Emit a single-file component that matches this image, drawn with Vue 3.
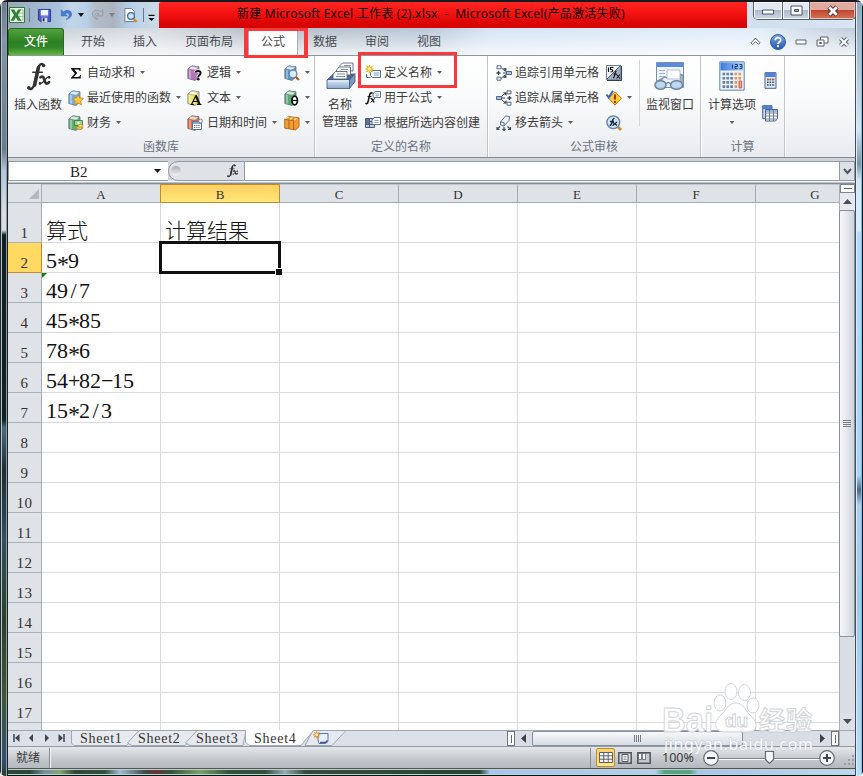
<script setup>
const ribbonTabs = [
  { label: '开始', w: 52 },
  { label: '插入', w: 52 },
  { label: '页面布局', w: 76 },
  { label: '公式', w: 52, active: true },
  { label: '数据', w: 52 },
  { label: '审阅', w: 52 },
  { label: '视图', w: 52 },
]
const library = [
  [
    { icon: 'sigma', text: '自动求和' },
    { icon: 'recent', text: '最近使用的函数' },
    { icon: 'money', text: '财务' },
  ],
  [
    { icon: 'logic', text: '逻辑' },
    { icon: 'textbook', text: '文本' },
    { icon: 'date', text: '日期和时间' },
  ],
  [
    { icon: 'lookup', text: '' },
    { icon: 'math', text: '' },
    { icon: 'more', text: '' },
  ],
]
const names = [
  { icon: 'define', text: '定义名称', drop: true },
  { icon: 'usein', text: '用于公式', drop: true },
  { icon: 'create', text: '根据所选内容创建' },
]
const audit = [
  { icon: 'precedents', text: '追踪引用单元格' },
  { icon: 'dependents', text: '追踪从属单元格' },
  { icon: 'eraser', text: '移去箭头', drop: true },
]
const auditIcons = [
  { icon: 'showf' },
  { icon: 'check', drop: true },
  { icon: 'evaluate' },
]
const columns = ['A', 'B', 'C', 'D', 'E', 'F', 'G']
const cells = {
  1: ['算式', '计算结果'],
  2: ['5*9'],
  3: ['49/7'],
  4: ['45*85'],
  5: ['78*6'],
  6: ['54+82-15'],
  7: ['15*2/3'],
}
const value = (r, c) => (cells[r] && cells[r][c]) || ''
const pieces = (t) => t.split(/([*\/+-])/).filter(Boolean)
const isOp = (p) => /^[*\/+-]$/.test(p)
const glyph = (p) => (p === '-' ? '−' : p)
const sheets = ['Sheet1', 'Sheet2', 'Sheet3', 'Sheet4']
</script>

<template>
  <svg class="defs" width="0" height="0">
    <defs>
      <linearGradient id="gTray" x1="0" y1="0" x2="0" y2="1"><stop offset="0" stop-color="#dbe8f7" /><stop offset="1" stop-color="#8fabd0" /></linearGradient>
      <linearGradient id="gHelp" x1="0" y1="0" x2="0" y2="1"><stop offset="0" stop-color="#7aa5e4" /><stop offset="1" stop-color="#2358b4" /></linearGradient>
      <linearGradient id="gCalc" x1="0" y1="0" x2="1" y2="0"><stop offset="0" stop-color="#3c78dc" /><stop offset="1" stop-color="#a9cffa" /></linearGradient>
      <symbol id="excel" viewBox="0 0 16 16">
        <path d="M.5.5h15v15H.5z" fill="#e9f5e6" stroke="#2d7d35" /><path d="M10 3h4v10h-4z" fill="#fff" stroke="#6aab67" stroke-width=".7" /><path d="M10 6h4M10 9.500h4" stroke="#6aab67" stroke-width=".7" />
        <path d="M1.500 2.500h3.800l1.800 3.500L9 2.500h3.300L8.700 8l3.700 5.800H8.800L6.800 10.200 5 13.800H1.500L5 8z" fill="#2b8434" />
      </symbol>
      <symbol id="save" viewBox="0 0 16 16">
        <path d="M1.500 1.500h13v13h-11l-2-2z" fill="#4a56c6" stroke="#2f3a96" /><path d="M4 2h8v6H4z" fill="#f0f5ff" /><path d="M4 8h8v1H4z" fill="#8fa0ef" /><path d="M5 10.500h6V15H5z" fill="#d4dbe9" /><path d="M6 11h2v3H6z" fill="#20254f" />
      </symbol>
      <symbol id="undo" viewBox="0 0 16 16">
        <path d="M2 2v7h7L6.500 6.800C8.500 5 11 5.500 11 8c0 2-1.300 3.500-3.500 5 4-.8 6.500-3 6.300-6.300C13.500 2.500 8 1.200 4.500 4.700z" fill="#4a7ed4" stroke="#3464b4" stroke-width=".7" />
      </symbol>
      <symbol id="redo" viewBox="0 0 16 16">
        <path d="M14 2v7H7l2.500-2.200C7.500 5 5 5.500 5 8c0 2 1.300 3.500 3.500 5-4-.8-6.500-3-6.300-6.300C2.500 2.500 8 1.200 11.500 4.700z" fill="#b3b9c1" stroke="#838d99" stroke-width=".7" />
      </symbol>
      <symbol id="preview" viewBox="0 0 16 16">
        <path d="M1.500.5h7l3 3v11h-10z" fill="#fff" stroke="#5f7690" /><circle cx="8" cy="8.500" r="3.600" fill="#c5e6fa" stroke="#4a6684" stroke-width="1.300" /><path d="M10.800 11.500l3.400 3.300" stroke="#d88a2a" stroke-width="2.400" />
      </symbol>
      <symbol id="fx" viewBox="0 0 26 31">
        <g fill="none" stroke="#333" stroke-linecap="round"><path d="M18.500 3.500C16.500.5 13 2.500 12 8L8.800 22C7.800 27.500 5 29.500 2.500 27" stroke-width="2.400" /><path d="M13 5.500L9 24" stroke-width="3.600" /><path d="M7 10.500h10" stroke-width="1.600" /><path d="M15 15.800c2.500-2 3.500 0 4.200 3s2 5 4.800 2" stroke-width="2.800" /><path d="M24 15.500c-3-1-5.500 7-9.500 7" stroke-width="1.400" /></g>
        <circle cx="18.300" cy="3.600" r="1.800" fill="#333" /><circle cx="3" cy="26.700" r="1.900" fill="#333" /><circle cx="24" cy="15.800" r="1.400" fill="#333" /><circle cx="14.600" cy="22.200" r="1.400" fill="#333" />
      </symbol>
      <symbol id="sigma" viewBox="0 0 16 16"><path d="M3 3h9.500v3h-.8C11.300 4.700 11 4.400 9.500 4.400H6.300L9.300 8l-3.600 3.900h4c1.600 0 2-.4 2.500-1.900h.8l-.4 3.500H3v-.8L6.800 8.500 3 3.900z" fill="#111" /></symbol>
      <symbol id="book" viewBox="0 0 16 16">
        <path d="M.8 4L5 .8l7 1V12l-4 3.500L.8 13.500z" fill="currentColor" stroke="#3e5870" stroke-width=".8" stroke-opacity=".75" /><path d="M1.200 4l6.800 1.300L11.800 2 5 1z" fill="currentColor" /><path d="M1.200 4l6.800 1.300L11.800 2 5 1z" fill="#fff" fill-opacity=".6" stroke="#52697d" stroke-width=".5" stroke-opacity=".7" /><path d="M3 2.600l7 1.200M3 5v8.800" stroke="#fff" stroke-opacity=".75" stroke-width=".9" />
      </symbol>
      <symbol id="recent" viewBox="0 0 16 16"><use href="#book" color="#74b3dd" /><path d="M10 4.500l1.700 3.400 3.900.5-2.900 2.600.8 3.900-3.500-2-3.500 2 .8-3.900L4.500 8.400l3.900-.5z" fill="#ffc63a" stroke="#c77b18" stroke-width=".7" /></symbol>
      <symbol id="money" viewBox="0 0 16 16"><use href="#book" color="#67ad73" /><path d="M6.500 5.500h8v5h-8z" fill="#9bd28c" stroke="#2f7740" stroke-width=".8" /><circle cx="10.500" cy="8" r="1.400" fill="#e6f6dc" /><ellipse cx="11.500" cy="12.800" rx="3.300" ry="1.700" fill="#f5c449" stroke="#a9791e" stroke-width=".7" /><ellipse cx="12.500" cy="10.800" rx="2.500" ry="1.400" fill="#fadc79" stroke="#a9791e" stroke-width=".6" /></symbol>
      <symbol id="logic" viewBox="0 0 16 16"><use href="#book" color="#b476b4" /><path d="M8.600 7.600c0-2 5-2.400 5 .5 0 2-2.300 1.900-2.300 4" fill="none" stroke="#fff" stroke-width="3.500" /><path d="M8.600 7.600c0-2 5-2.400 5 .5 0 2-2.300 1.900-2.300 4" fill="none" stroke="#111" stroke-width="1.900" /><circle cx="11.300" cy="14.300" r="1.300" fill="#111" /></symbol>
      <symbol id="textbook" viewBox="0 0 16 16"><use href="#book" color="#f0e46c" /><path d="M4.500 14.500L9 5.500M3.500 14.500h3.500M10 14.500h4.500M6.500 11.500h5" stroke="#111" stroke-width="1.200" fill="none" /><path d="M8.800 5.500l3.800 9" stroke="#111" stroke-width="2.200" /></symbol>
      <symbol id="date" viewBox="0 0 16 16"><use href="#book" color="#e8673c" /><path d="M5.500 6.500h9v8h-9z" fill="#fff" stroke="#56749c" /><path d="M6 7h8v2H6z" fill="#84aad8" /><path d="M7 10.500h6M7 12.500h6" stroke="#4a6a94" stroke-dasharray="1.200 1" /><circle cx="13.500" cy="6" r="2" fill="#e9eef4" stroke="#666" stroke-width=".7" /></symbol>
      <symbol id="lookup" viewBox="0 0 16 16"><use href="#book" color="#5b96c9" /><circle cx="9" cy="9" r="3.900" fill="#d2ebfa" stroke="#6f8296" stroke-width="1.300" /><path d="M11.800 12l3 3" stroke="#a85f1e" stroke-width="2.300" /></symbol>
      <symbol id="math" viewBox="0 0 16 16"><use href="#book" color="#5ea870" /><ellipse cx="10.700" cy="10.500" rx="2.700" ry="4.300" fill="#fff" stroke="#111" stroke-width="1.800" /><path d="M8.500 10.500h4.500" stroke="#111" stroke-width="1.200" /></symbol>
      <symbol id="more" viewBox="0 0 17 16"><path d="M.7 4L4.500 1l11.500 1.500V12L12.500 15.400.7 13.500z" fill="#f19b31" stroke="#a65d14" stroke-width=".8" /><path d="M.7 4l4.500.8L8.500 2M5.200 4.800V14M5.200 4.800l5 .5L13 2.500M10.200 5.300V15" fill="none" stroke="#a65d14" stroke-width=".9" /><path d="M1.500 3.500L4.700 1.500M6 4.200L9 2M11 4.800l2.300-2" stroke="#fff1cf" stroke-width="1.200" /></symbol>
      <symbol id="manager" viewBox="0 0 30 28">
        <path d="M1 18l6-6h21.500l-5 6z" fill="#4e6a94" stroke="#3f5878" stroke-width=".8" />
        <g fill="#fff" stroke="#54677f" stroke-width=".9"><path d="M14 3.500L16.500 1h10.500v8H14z" /><path d="M10.500 8L13 5h11.500v8H10.500z" /><path d="M7 12.500L9.500 9.500H21V17H7z" /></g>
        <path d="M18 3.500h7M15 7.500h7M11 12h8M10 14.500h9" stroke="#7f92ab" />
        <path d="M23.500 18l5.500-6.500v8L23.500 26.500z" fill="#7b98c1" stroke="#3f5878" stroke-width=".8" /><path d="M1 18h22.500v8.500H1z" fill="url(#gTray)" stroke="#3f5878" stroke-width=".8" /><path d="M1.800 18.800h21" stroke="#fff" />
      </symbol>
      <symbol id="define" viewBox="0 0 16 16"><path d="M1.500 9v3.500h4M5.500 7.500l2-2h8v7h-8l-2-2z" fill="#f7fbff" stroke="#5a708e" /><path d="M9 8h5M9 10h5" stroke="#86a1c6" /><path d="M4.500 0v8M.5 4h8M1.500 1l6 6M7.500 1l-6 6" stroke="#eeb01c" stroke-width="1.300" /><circle cx="4.500" cy="4" r="1.800" fill="#fff08c" /></symbol>
      <symbol id="usein" viewBox="0 0 16 16"><path d="M8 4l2-2.500h5.500v6H9L8 6z" fill="#f7fbff" stroke="#5a708e" /><path d="M10.500 4h3.500M10.500 5.800h3.500" stroke="#86a1c6" /><g fill="none" stroke="#111"><path d="M7.500 3.500c-1.500-1.500-2.500 0-3 2L3 12c-.5 2-1.500 2-2.500 1.200" stroke-width="1.500" /><path d="M2.500 6.500h4" /><path d="M5.500 8.500c2-1 2 4 4 3.500" stroke-width="1.400" /><path d="M10 8.300L5.500 12.500" /></g></symbol>
      <symbol id="create" viewBox="0 0 16 16"><path d="M.5 3.500h9v9h-9z" fill="#bfcbe0" stroke="#4d5d78" /><path d="M.5 6.500h9M.5 9.500h9M4.500 3.500v9" stroke="#4d5d78" /><path d="M1 4h3v5H1z" fill="#5f7296" /><path d="M7 5.500l2-3h6.500v7H7z" fill="#fff" stroke="#5a708e" /><path d="M9.500 5.500h4M9.500 7.500h4" stroke="#86a1c6" /></symbol>
      <symbol id="precedents" viewBox="0 0 16 16"><g fill="#fff" stroke="#536985"><path d="M1 .8h4v3H1zM1 12.200h4v3H1z" /><path d="M10.500 6.500h5v3h-5z" fill="#a9c0dd" /></g><path d="M.5 8h4M2.500 6v4" stroke="#334054" stroke-width="1.300" /><path d="M5.500 3l4 3.500M5.500 13l4-3.500M7 8h3" stroke="#334054" fill="none" /><path d="M7 3l3.500.2-.3 3.500zM7 13l3.500-.2-.3-3.500z" fill="#334054" /></symbol>
      <symbol id="dependents" viewBox="0 0 16 16"><g fill="#fff" stroke="#536985"><path d="M11 .8h4v3h-4zM11 12.200h4v3h-4z" /><path d="M.5 6.500h5v3h-5z" fill="#a9c0dd" /></g><path d="M11.500 8h4M13.500 6v4" stroke="#334054" stroke-width="1.300" /><path d="M5.500 6.500l4-3.500M5.500 9.500l4 3.500M6 8h3" stroke="#334054" fill="none" /><path d="M10.500 2.500v3.500L7 2.500zM10.500 13.500V10L7 13.500z" fill="#334054" /></symbol>
      <symbol id="eraser" viewBox="0 0 16 16"><path d="M4.500 7l5-6 4 .5-.5 4-5 5.500-3.500-1z" fill="#eef2f8" stroke="#5b7293" /><path d="M4.500 7l3.700.8L8 11" fill="none" stroke="#5b7293" /><path d="M4 11.500l-3 3M8 12v3.500M11.500 11.500l3 3M1 12v2.500h2.500M6.500 14l1.500 1.500L9.500 14M14.500 12v2.500H12" fill="none" stroke="#3c4b62" stroke-width="1.200" /></symbol>
      <symbol id="showf" viewBox="0 0 16 16"><path d="M.5.500h14v14H.500z" fill="#eef2f7" stroke="#4d5d72" stroke-width=".8" /><path d="M14.500 1v13.500H1z" fill="#9cadc3" /><path d="M14.500.500l-14 14" stroke="#333" stroke-width=".8" /><path d="M2.500 2.500v4.500M7.500 2.500h-3v2c3-.5 3 2.500 0 2.500" fill="none" stroke="#111" stroke-width="1.100" /><path d="M10.500 6.500c-2-1-1 6-3.500 6.500M7.500 9h3M10.500 9.500l3.500 4M14 9.500l-3.500 4" fill="none" stroke="#111" stroke-width="1.100" /><path d="M1 15.500h14.500V1" stroke="#333f50" fill="none" /></symbol>
      <symbol id="check" viewBox="0 0 16 16"><path d="M9 1.800l6.500 6.500L9 15 2.500 8.300z" fill="#ffcd38" stroke="#b77912" /><path d="M9 4.500v5M9 11v2" stroke="#c42414" stroke-width="2" /><path d="M.5 4.500l2.200 3L7 .8" fill="none" stroke="#3865bc" stroke-width="2" /></symbol>
      <symbol id="evaluate" viewBox="0 0 16 16"><path d="M12 12l3 3" stroke="#d28a30" stroke-width="2.800" /><circle cx="7.300" cy="7.300" r="6.400" fill="#cfe3f6" stroke="#67809e" stroke-width="1.300" /><path d="M8.500 3.500c-2.500-1.200-1.800 7-4.800 7M4 6.500h4M7 7.500l4 3M11 7l-4.500 3.800" fill="none" stroke="#17243c" stroke-width="1.300" /></symbol>
      <symbol id="watch" viewBox="0 0 32 32"><path d="M2.500 1.500h27v25h-27z" fill="#eef4fd" stroke="#7b8fb2" /><path d="M3 2h26v4H3z" fill="#5c8ade" /><path d="M5 9.500h6M5 12.500h6M5 15.500h6M5 18.500h4" stroke="#a4b4ce" /><path d="M13 9h13v9H13z" fill="#fff" stroke="#b3c1d8" /><g fill="#b8d4ec" fill-opacity=".9" stroke="#70839c" stroke-width="1.500"><ellipse cx="6.500" cy="24" rx="5.500" ry="4.300" /><ellipse cx="22.500" cy="24" rx="6" ry="4.300" /></g><path d="M12 23c1.500-2 3-2 4.500 0M2 21l9-5 2 1M27 21V13.500l2 1V22" fill="none" stroke="#77889e" stroke-width="1.300" /></symbol>
      <symbol id="calc" viewBox="0 0 26 30"><path d="M.8.8h24.400v28.400H.8z" fill="#eaf2fc" stroke="#5f83b8" /><path d="M1.500 1.500h23v8h-23z" fill="url(#gCalc)" /><path d="M13.500 3.500v4M16 3.500h2.500v2H16v2h2.500M20.500 3.500H23v4h-2.500M21 5.500h2" fill="none" stroke="#16335e" stroke-width=".9" /><path d="M3.500 13h10.500M3.500 17.200h10.500M3.500 21.400h10.500M3.500 25.600h10.500" stroke="#6c7f99" stroke-width="2.600" stroke-dasharray="2.700 1.200" /><path d="M15.500 13h7.500M15.500 17.200h7.500M15.500 21.400h3M15.500 25.600h3" stroke="#e39a4e" stroke-width="2.600" stroke-dasharray="2.700 1.200" /><path d="M20 20h2.700v7H20z" fill="#f3a08c" stroke="#c9452c" stroke-width=".8" /></symbol>
      <symbol id="calcnow" viewBox="0 0 13 17"><path d="M1 .7h11v15.600H1z" fill="#dfe9f6" stroke="#4a6288" /><path d="M1.500 1h10v4h-10z" fill="#4d82d8" /><path d="M3 7.500h8M3 10.300h8M3 13.100h8" stroke="#36507a" stroke-width="1.500" stroke-dasharray="1.600 1" /><path d="M3 7.500h8" stroke="#cf4c3a" stroke-width="1.500" stroke-dasharray="1.600 1" /></symbol>
      <symbol id="calcsheet" viewBox="0 0 16 17"><path d="M.7.7H10v13H.7z" fill="#c7d7ee" stroke="#4a6288" /><path d="M1 1h9v3H1z" fill="#4d82d8" /><path d="M3.500 4.500h12v9l-2 2.500h-10z" fill="#fff" stroke="#4f627e" /><path d="M4 5h11v2H4z" fill="#9bb6df" /><path d="M3.500 8h12M3.500 11h12M3.500 14h11M7.500 5v11M11.500 5v11" stroke="#5f7491" stroke-width=".9" /></symbol>
      <symbol id="newsheet" viewBox="0 0 16 14"><path d="M5 2.500h10v8l-2.500 2H6L5 9z" fill="#e9f0fc" stroke="#5a74ad" /><path d="M7 11.500h5.500l2-2" stroke="#40599b" stroke-width="1.500" fill="none" /><path d="M3.800.3v7M.3 3.800h7M1.300 1.300l5 5M6.300 1.300l-5 5" stroke="#e58d23" stroke-width="1.200" /><circle cx="3.800" cy="3.800" r="1.500" fill="#fff2c0" /></symbol>
    </defs>
  </svg>

  <div class="window">
    <header class="titlebar">
      <div class="quick">
        <svg class="q-excel"><use href="#excel" /></svg>
        <i class="bar"></i>
        <svg class="q-save"><use href="#save" /></svg>
        <svg class="q-undo"><use href="#undo" /></svg>
        <i class="drop black"></i>
        <svg class="q-redo"><use href="#redo" /></svg>
        <i class="drop grey"></i>
        <svg class="q-prev"><use href="#preview" /></svg>
        <i class="bar second"></i>
        <svg class="q-more" viewBox="0 0 8 8"><path d="M.5 1h7" stroke="#111" stroke-width="1.300" /><path d="M.5 4h7L4 7.500z" fill="#111" /></svg>
      </div>
      <div class="title"><span>新建 Microsoft Excel 工作表 (2).xlsx&nbsp; -&nbsp; Microsoft Excel(产品激活失败)</span></div>
      <div class="controls">
        <div class="ctl"><svg width="14" height="6"><path d="M1.500 1h11v4h-11z" fill="#fff" stroke="#4a5468" /></svg></div>
        <div class="ctl mid"><svg width="13" height="11"><path d="M1 1h11v9H1z" fill="#fff" stroke="#4a5468" /><path d="M4.500 4.500h4v2h-4z" fill="#9ba9bd" stroke="#4a5468" /></svg></div>
        <div class="ctl close"><svg width="14" height="12"><path d="M3 2l8 8M11 2l-8 8" stroke="#4e343a" stroke-width="4.800" /><path d="M3.300 2.300l7.400 7.400M10.700 2.300L3.300 9.700" stroke="#fff" stroke-width="2.800" /></svg></div>
      </div>
    </header>

    <nav class="tabs">
      <div class="file">文件</div>
      <div v-for="t in ribbonTabs" :key="t.label" class="tab" :class="{ active: t.active }" :style="{ width: t.w + 'px' }">{{ t.label }}</div>
      <div class="tabtools">
        <svg width="11" height="9"><path d="M1 5.800L5.500 1.200 10 5.800 8.500 7.500 5.500 4.600 2.500 7.500z" fill="#fff" stroke="#59616c" /></svg>
        <svg width="16" height="16"><circle cx="8" cy="8" r="7.500" fill="url(#gHelp)" stroke="#2f5da8" /><path d="M5.300 6.300c0-3.500 5.400-3.300 5.400-.3 0 2-2.700 1.900-2.700 4" stroke="#fff" stroke-width="1.800" fill="none" /><circle cx="8" cy="12.200" r="1.100" fill="#fff" /></svg>
        <svg width="12" height="6"><path d="M1 1h10v4H1z" fill="#fff" stroke="#59616c" /></svg>
        <svg width="13" height="11"><path d="M4.500 1h7.500v6H4.500z" fill="#fff" stroke="#59616c" /><path d="M1 4h7v6H1z" fill="#fff" stroke="#59616c" /><path d="M3.500 6.500h2v1h-2z" fill="none" stroke="#59616c" /></svg>
        <svg width="12" height="10"><path d="M2.500 1.500l7 7M9.500 1.500l-7 7" stroke="#59616c" stroke-width="4" /><path d="M2.500 1.500l7 7M9.500 1.500l-7 7" stroke="#fff" stroke-width="2" /></svg>
      </div>
    </nav>

    <section class="ribbon">
      <div class="group g1">
        <div class="body">
          <div class="big"><svg class="i-fx"><use href="#fx" /></svg><span>插入函数</span></div>
          <div v-for="(col, i) in library" :key="i" class="stack">
            <div v-for="b in col" :key="b.icon" class="cmd"><svg class="ic"><use :href="'#' + b.icon" /></svg><span v-if="b.text">{{ b.text }}</span><i class="drop"></i></div>
          </div>
        </div>
        <div class="caption">函数库</div>
      </div>
      <div class="group g2">
        <div class="body">
          <div class="big"><svg class="i-manager"><use href="#manager" /></svg><span>名称<br />管理器</span></div>
          <div class="stack">
            <div v-for="b in names" :key="b.icon" class="cmd"><svg class="ic"><use :href="'#' + b.icon" /></svg><span>{{ b.text }}</span><i v-if="b.drop" class="drop"></i></div>
          </div>
        </div>
        <div class="caption">定义的名称</div>
      </div>
      <div class="group g3">
        <div class="body">
          <div class="stack">
            <div v-for="b in audit" :key="b.icon" class="cmd"><svg class="ic"><use :href="'#' + b.icon" /></svg><span>{{ b.text }}</span><i v-if="b.drop" class="drop"></i></div>
          </div>
          <div class="stack">
            <div v-for="b in auditIcons" :key="b.icon" class="cmd"><svg class="ic"><use :href="'#' + b.icon" /></svg><i v-if="b.drop" class="drop"></i></div>
          </div>
          <div class="big"><svg class="i-watch"><use href="#watch" /></svg><span>监视窗口</span></div>
        </div>
        <div class="caption">公式审核</div>
      </div>
      <div class="group g4">
        <div class="body">
          <div class="big"><svg class="i-calc"><use href="#calc" /></svg><span>计算选项</span><i class="drop"></i></div>
          <div class="small"><svg class="i-now"><use href="#calcnow" /></svg><svg class="i-sheet"><use href="#calcsheet" /></svg></div>
        </div>
        <div class="caption">计算</div>
      </div>
    </section>

    <section class="formula">
      <div class="namebox"><span>B2</span><i class="drop black"></i></div>
      <div class="fxzone"><i class="knob"></i><svg class="i-fxs"><use href="#fx" /></svg></div>
      <div class="input"></div>
      <div class="expand"><svg width="9" height="7"><path d="M1 1l3.500 4L8 1" fill="none" stroke="#4c545e" stroke-width="2" /></svg></div>
    </section>

    <section class="work">
      <div class="sheet">
        <div class="row head">
          <div class="rh corner"><i></i></div>
          <div v-for="c in columns" :key="c" class="ch" :class="{ on: c === 'B' }">{{ c }}</div>
        </div>
        <div v-for="r in 18" :key="r" class="row" :class="{ first: r === 1 }">
          <div class="rh" :class="{ on: r === 2 }">{{ r < 18 ? r : '' }}</div>
          <div v-for="(c, ci) in columns" :key="c" class="cell" :class="{ sel: r === 2 && ci === 1, flag: r === 3 && ci === 0 }">
            <span v-if="value(r, ci)"><template v-for="(p, k) in pieces(value(r, ci))" :key="k"><b v-if="isOp(p)" :class="{ star: p === '*' }">{{ glyph(p) }}</b><template v-else>{{ p }}</template></template></span>
          </div>
        </div>
      </div>
      <div class="vscroll">
        <div class="split"><i></i></div>
        <div class="arrow"><svg width="9" height="5"><path d="M0 5h9L4.500 0z" fill="#4b4f55" /></svg></div>
        <div class="thumb"><i></i><i></i><i></i><i></i></div>
        <div class="gap"></div>
        <div class="arrow down"><svg width="9" height="5"><path d="M0 0h9L4.500 5z" fill="#4b4f55" /></svg></div>
      </div>
    </section>

    <section class="sheetbar">
      <div class="navs">
        <svg width="7" height="8"><path d="M1 0v8" stroke="#3d444d" stroke-width="1.500" /><path d="M6.500 0v8L2 4z" fill="#3d444d" /></svg>
        <svg width="7" height="8"><path d="M5 0v8L1 4z" fill="#3d444d" /></svg>
        <svg width="7" height="8"><path d="M2 0v8l4-4z" fill="#3d444d" /></svg>
        <svg width="7" height="8"><path d="M.5 0v8L5 4z" fill="#3d444d" /><path d="M6 0v8" stroke="#3d444d" stroke-width="1.500" /></svg>
      </div>
      <div class="strip">
        <svg class="shapes" width="290" height="17">
          <g fill="#e6e9ee" stroke="#a0a8b4"><path d="M.5.500H68L56 15.500H3L.5 13z" /><path d="M68 .500h58L114 15.500H61L56.500 13z" /><path d="M126 .500h49L172 15.500H119L114.500 13z" /><path d="M242 .500h33L261 15.500H234z" /></g>
          <path d="M174.500 0H243L230 15.500H178L174.500 12z" fill="#fff" /><path d="M174.500 0v12l3.500 3.500h52L242.500 .5" fill="none" stroke="#a0a8b4" />
        </svg>
        <div class="labels"><span v-for="s in sheets" :key="s">{{ s }}</span><svg class="i-new"><use href="#newsheet" /></svg></div>
      </div>
      <div class="hscroll">
        <div class="hsplit"><i></i></div>
        <div class="harrow"><svg width="5" height="9"><path d="M5 0v9L0 4.500z" fill="#3d4248" /></svg></div>
        <div class="hthumb"><i></i><i></i><i></i><i></i></div>
        <div class="harrow right"><svg width="5" height="9"><path d="M0 0v9l5-4.500z" fill="#3d4248" /></svg></div>
        <div class="hsplit"><i></i></div>
      </div>
      <div class="cornerbox"></div>
    </section>

    <footer class="status">
      <div class="ready">就绪</div>
      <div class="views">
        <div class="view on"><svg width="14" height="11"><path d="M.5.5h13v10H.5zM.5 3.800h13M.5 7.200h13M4.800.5v10M9.200.5v10" fill="#fff" stroke="#5c5f66" /></svg></div>
        <div class="view"><svg width="14" height="12"><path d="M.8.800h12.400v10.400H.800z" fill="#d5d8dc" stroke="#50555c" stroke-width="1.500" /><path d="M4 2.500h6v7H4z" fill="#fff" stroke="#50555c" /><path d="M5.500 4.500h3M5.500 6h3M5.500 7.500h3" stroke="#777" stroke-width=".7" /></svg></div>
        <div class="view"><svg width="14" height="12"><path d="M.8.800h12.400v10.400H.800z" fill="#c4c8ce" stroke="#50555c" stroke-width="1.500" /><path d="M1.500 1.500h3v6h-3zM5.500 1.500h3v6h-3z" fill="#fff" stroke="#50555c" stroke-width=".7" /></svg></div>
      </div>
      <span class="percent">100%</span>
      <svg class="zoom" width="134" height="18"><path d="M16 9.500h103" stroke="#7d858f" /><path d="M16 10.500h103" stroke="#fff" /><g fill="#f7f8f9" stroke="#646b73" stroke-width="1.200"><circle cx="9" cy="9" r="7.300" /><circle cx="125" cy="9" r="7.300" /><path d="M63.500 2.500h8v8l-4 4-4-4z" /></g><path d="M5 9h8M121 9h8M125 5v8" stroke="#3f464f" stroke-width="2" /></svg>
      <svg class="grip" width="12" height="12"><path d="M9 0h2v2H9zM5 4h2v2H5zM9 4h2v2H9zM1 8h2v2H1zM5 8h2v2H5zM9 8h2v2H9z" fill="#9ba0a8" /></svg>
    </footer>

    <div class="mark tabmark"></div>
    <div class="mark namemark"></div>

    <svg class="watermark" width="160" height="80" viewBox="0 0 160 80">
      <g fill="#fff" fill-opacity=".9" stroke="#c9ccd1" stroke-opacity=".85" stroke-width="1">
        <ellipse cx="60" cy="23" rx="6" ry="8" /><ellipse cx="71" cy="11.500" rx="6" ry="8" /><ellipse cx="84.500" cy="12.500" rx="6" ry="8" /><ellipse cx="93" cy="25.500" rx="6" ry="7.500" />
        <path d="M76 23c8 0 9 8 15 13 8 7 6 16-3 16H64c-9 0-11-9-4-16 6-5 8-13 16-13z" />
        <text x="2" y="52" class="wm-bai" textLength="51" lengthAdjust="spacingAndGlyphs">Bai</text>
        <text x="65" y="47" class="wm-du" textLength="23">du</text>
        <text x="99" y="50" class="wm-cn" textLength="53">经验</text>
      </g>
      <text x="4" y="70" class="wm-url" textLength="149">jingyan.baidu.com</text>
    </svg>
  </div>
</template>

<style>
html, body { margin: 0; overflow: hidden; }
</style>

<style scoped>
* { box-sizing: border-box; }
.defs { position: absolute; }
svg { display: block; flex: none; }
.window {
  position: relative; width: 863px; height: 776px; display: flex; flex-direction: column;
  padding: 1px 8px 8px; font: 12px/16px "Noto Sans", "Noto Sans CJK SC", sans-serif; color: #3b3b3b; overflow: hidden;
  border-radius: 7px 7px 5px 5px;
  background:
    linear-gradient(#16191d, #16191d) 0 0 / 100% 2px no-repeat,
    linear-gradient(90deg, #222a30 0 1px, #b9c5ca 1px 2px, transparent 2px 6px, #8fa0a4 6px 7px, #17201f 7px 8px) 0 0 / 8px 100% no-repeat,
    linear-gradient(90deg, #404d5e 0 1px, #d9efff 1px 2px, transparent 2px 6px, #61c8e8 6px 7px, #10151b 7px 8px) 100% 0 / 8px 100% no-repeat,
    linear-gradient(#68778b, #8493a6 40px, #687b90 150px, #acc4e0 170px, #d8dce4 212px, #d8dce4 230px, #111f24 235px, #0e2226 420px, #476a82 428px, #1b2c35 470px, #2e5060 540px, #26422a 620px, #3a5836 700px, #315078 760px, #263f2a) 0 0 / 8px 100% no-repeat,
    linear-gradient(#9aa4b0, #d5e3f2 130px, #8390a0 164px, #d9e4ef 180px, #dcebfa 230px, #b6d8fb 233px, #aed2f7 475px, #526780 490px, #b0cfef 505px, #a8c8ea 600px, #bddcf8) 100% 0 / 8px 100% no-repeat,
    linear-gradient(#4a5651 0 1px, #c5cfcc 1px 2px, transparent 2px 6px, #b6d6d2 6px 7px, #0d1314 7px) 0 100% / 100% 8px no-repeat,
    linear-gradient(90deg, #2d4638 30px, #7890a0 45px, #86a474 60px, #304638 75px, #34503c 105px, #a2bdd2 120px, #3f4c48 145px, #6a3238 155px, #34513c 170px, #7aa26c 200px, #33503b 230px, #334d39 265px, #95abb8 285px, #344b3a 305px, #2b4434 480px, #a6c5ea 490px, #b4cff0 655px, #54a080 665px, #58a482 690px, #a6c5ea 698px, #bdd9f6) 0 100% / 100% 8px no-repeat,
    #ced6e0;
}
.titlebar { height: 26px; margin-top: 1px; flex: none; display: flex; background: linear-gradient(90deg, #99a8b8, #a8c3de 50px, #c3d5e8 62px, #b7d0e8 78px, #b3bcc7 88px, #aab3be 105px, #b5d0ea 122px, #cddae6 150px, #b3c2d3 160px, #dfe9f3 735px, #d1deec 745px, #d8e5f3); }
.quick { width: 151px; display: flex; align-items: center; padding-left: 1px; flex: none; }
.bar { width: 1px; height: 14px; background: #6c7887; margin: 0 7px 0 4px; }
.q-excel { width: 16px; height: 16px; }
.q-save { width: 15px; height: 15px; }
.q-undo { width: 15px; height: 14px; margin-left: 7px; }
.q-redo { width: 15px; height: 14px; margin-left: 6px; }
.q-prev { width: 16px; height: 15px; margin-left: 8px; }
.bar.second { margin: 0 4px 0 4px; }
.q-more { width: 7px; height: 8px; margin-top: 5px; }
.drop { width: 5px; height: 3px; flex: none; background: #606060; clip-path: polygon(0 0, 100% 0, 50% 100%); margin-left: 5px; }
.drop.black { width: 7px; height: 4px; background: #161616; }
.quick .drop { margin-left: 4px; width: 6px; height: 4px; }
.drop.grey { background: #7a828d; }
.title { width: 588px; flex: none; background: linear-gradient(#ff2522, #f31311 45%, #da0504 80%, #d50707); color: #120506; padding: 4px 0 0 78px; white-space: nowrap; border-radius: 2px 0 0 0; letter-spacing: .25px; }
.controls { display: flex; width: 103px; height: 18px; margin-left: 6px; border: 1px solid #53606f; border-top: 0; border-radius: 0 0 5px 5px; overflow: hidden; flex: none; }
.ctl { width: 28px; display: flex; align-items: center; justify-content: center; background: linear-gradient(#e3e9f0 45%, #aebaca 50%, #ccd8e4); box-shadow: inset 0 0 0 1px #f3f6fa; }
.ctl:first-child { padding-top: 3px; }
.ctl.mid { width: 27px; border-left: 1px solid #53606f; }
.ctl.close { flex: 1; border-left: 1px solid #53606f; background: linear-gradient(#e0aaa0 45%, #bf4631 50%, #d87655); box-shadow: inset 0 0 0 1px #edbdb4; }
.tabs { height: 27px; flex: none; display: flex; background: linear-gradient(transparent, rgba(255,255,255,.78)), linear-gradient(90deg, #c5ccd5, #d7dbe1 150px, #b5bcc6 250px, #b9c8d9 420px, #d4e3f3 480px, #e1edf9 750px, #bfccd9 848px); }
.file { width: 56px; height: 27px; margin-right: 3px; background: linear-gradient(#52a23e, #2c8024 50%, #2f8429 70%, #65b840); border: 1px solid #256b22; border-bottom: 0; border-radius: 3px 3px 0 0; color: #fff; text-align: center; line-height: 26px; font-weight: 500; }
.tab { height: 27px; text-align: center; line-height: 28px; color: #484b50; flex: none; }
.tab.active { background: #fff; border: 1px solid #a9afb7; border-bottom: 0; margin: 0 1px 0 1px; width: 50px !important; line-height: 26px; }
.tabtools { margin-left: auto; display: flex; align-items: center; gap: 9px; padding: 0 5px 0 0; height: 27px; }
.ribbon { height: 103px; flex: none; display: flex; border-top: 1px solid #8e959f; border-bottom: 1px solid #858b93; background: linear-gradient(#fff, #fafbfc 40%, #e9ebef); }
.group { border-right: 1px solid #bfc4ca; box-shadow: 1px 0 0 #fff; display: flex; flex-direction: column; flex: none; }
.g1 { width: 307px; } .g2 { width: 173px; } .g3 { width: 213px; } .g4 { width: 84px; }
.body { height: 83px; display: flex; padding-top: 4px; }
.g1 .body { padding-left: 6px; } .g2 .body { padding-left: 5px; } .g3 .body { padding-left: 8px; } .g4 .body { padding-left: 7px; }
.caption { text-align: center; color: #6b7280; line-height: 16px; white-space: nowrap; }
.stack { display: flex; flex-direction: column; flex: none; }
.cmd { height: 25px; display: flex; align-items: center; white-space: nowrap; }
.ic { width: 16px; height: 16px; margin-right: 3px; }
.cmd > .ic + .drop { margin-left: 2px; }
.g1 .stack:nth-child(2) { width: 119px; }
.g1 .stack:nth-child(3) { width: 97px; }
.g1 .stack:nth-child(3) .ic { margin-right: 4px; }
.big { display: flex; flex-direction: column; align-items: center; text-align: center; flex: none; white-space: nowrap; }
.g1 .big { width: 48px; margin-right: 6px; }
.i-fx { width: 25px; height: 30px; margin: 2px 0 5px; }
.i-manager { width: 30px; height: 28px; margin: 2px 0 6px; }
.g2 .big { width: 41px; margin-right: 4px; line-height: 17px; }
.g2 .big span { margin-left: -1px; }
.g3 .stack:first-child { width: 110px; }
.g3 .stack:nth-child(2) { width: 33px; }
.g3 .big { width: 61px; border-left: 1px solid #d3d7dc; height: 66px; }
.i-watch { width: 32px; height: 32px; margin: 1px 0 4px; }
.i-calc { width: 26px; height: 30px; margin: 1px 0 6px; }
.g4 .big { width: 48px; }
.g4 .big .drop { margin: 8px 0 0; }
.small { margin-left: 6px; padding: 12px 0 0 0; display: flex; flex-direction: column; gap: 16px; align-items: center; flex: none; }
.i-now { width: 13px; height: 17px; } .i-sheet { width: 16px; height: 17px; }
.formula { height: 26px; flex: none; display: flex; padding: 3px 0 3px; background: linear-gradient(#cfd3d9 0 3px, #cfd4da 3px 22px, #f5f6f8 23px, #f5f6f8 24px, #858d96 25px); }
.namebox { width: 160px; height: 20px; border: 1px solid #9199a2; border-right: 0; background: #fff; display: flex; align-items: center; padding-left: 61px; color: #222; font: 15px/20px "Liberation Serif", serif; }
.namebox span { width: 19px; padding-top: 1px; }
.namebox .drop { margin-left: 65px; }
.fxzone { width: 77px; height: 20px; border: 1px solid #9199a2; border-radius: 10px 0 0 10px; background: #dfe2e6; display: flex; align-items: center; }
.knob { width: 10px; height: 10px; border-radius: 5px; background: linear-gradient(#a8adb4, #f4f5f6); margin-left: 2px; }
.i-fxs { width: 13px; height: 14px; margin-left: 45px; }
.input { flex: 1; height: 20px; background: #fff; border: solid #9199a2; border-width: 1px 0; }
.expand { width: 16px; height: 20px; border: 1px solid #9199a2; background: #dde1e5; display: flex; align-items: center; justify-content: center; }
.work { height: 546px; flex: none; display: flex; }
.sheet { width: 831px; height: 546px; overflow: hidden; background: #fff; }
.row { display: flex; height: 30px; width: 900px; }
.row.first { height: 40px; }
.row.head { height: 19px; }
.rh { width: 34px; flex: none; background: #dfe2e7; border-right: 1px solid #a4adb6; border-bottom: 1px solid #a9b2bb; display: flex; align-items: flex-end; justify-content: center; font: 15px/18px "Liberation Serif", serif; letter-spacing: .5px; color: #333; }
.rh.on { background: #ffd961; border-color: #c28b2f; }
.corner i { width: 0; height: 0; border: 5px solid #b4b9bf; border-top-color: transparent; border-left-color: transparent; margin: 0 0 3px 18px; }
.ch { width: 119px; flex: none; background: #dfe2e7; border: solid #a4adb6; border-width: 0 1px 1px 0; text-align: center; font: 13px/20px "Liberation Serif", serif; color: #333; border-top: 1px solid #c2c7cd; }
.ch.on { background: linear-gradient(#fecf60, #ffe77a); border-color: #c28b2f; box-shadow: -1px 0 0 #c28b2f; }
.cell { width: 119px; flex: none; border: solid #d8dadd; border-width: 0 1px 1px 0; display: flex; align-items: flex-end; padding: 0 0 0 4px; font: 22px/25px "Liberation Serif", "Noto Sans CJK SC", serif; color: #111; white-space: nowrap; position: relative; }
.cell span { height: 24px; }
.first .cell { font-size: 21px; font-weight: 300; line-height: 25px; }
.first .cell span { height: 23px; }
.cell b { display: inline-block; width: 11px; text-align: center; font-weight: 400; line-height: 20px; }
.cell b.star { position: relative; top: 4px; font-size: 24px; }
.cell.sel::before { content: ""; box-sizing: border-box; position: absolute; left: -2px; top: -2px; width: 122px; height: 33px; border: 3px solid #111; z-index: 2; }
.cell.sel::after { content: ""; box-sizing: border-box; position: absolute; left: 115px; top: 26px; width: 6px; height: 6px; background: #111; box-shadow: -1px -1px 0 #fff; z-index: 3; }
.cell.flag::before { content: ""; position: absolute; left: 0; top: 0; width: 5px; height: 5px; background: #0b7a12; clip-path: polygon(0 0, 100% 0, 0 100%); }
.vscroll { width: 16px; display: flex; flex-direction: column; background: #d9dee6; border-left: 1px solid #a8afb8; }
.split { height: 9px; background: #fff; border: 1px solid #7d858e; display: flex; align-items: center; justify-content: center; }
.split i { width: 8px; height: 1px; background: #667; }
.arrow { height: 17px; display: flex; align-items: center; justify-content: center; background: #e6e9ed; }
.thumb { height: 427px; border: 1px solid #88909c; border-radius: 2px; background: linear-gradient(90deg, #f6f7fa, #e4e7ed 50%, #cfd3db); display: flex; flex-direction: column; align-items: center; justify-content: center; gap: 1px; margin-left: -1px; }
.thumb i { width: 8px; height: 1px; background: #777d86; }
.gap { flex: 1; background: #d8dde6; }
.arrow.down { background: #dce0e8; }
.sheetbar { height: 17px; flex: none; display: flex; background: #dce0e8; border-top: 1px solid #a0a8b4; border-bottom: 1px solid #939aa4; }
.navs { width: 62px; display: flex; align-items: center; gap: 8px; padding-left: 5px; height: 14px; }
.strip { width: 437px; display: grid; margin-top: -1px; height: 16px; overflow: hidden; }
.shapes, .labels { grid-area: 1 / 1; }
.shapes { z-index: 0; margin-left: 1px; }
.labels { z-index: 1; display: flex; padding-left: 10px; font: 14px/18px "Liberation Serif", serif; letter-spacing: .75px; color: #333; }
.labels span { width: 58px; }
.i-new { width: 16px; height: 14px; margin: 1px 0 0 1px; }
.hscroll { width: 332px; height: 15px; display: flex; background: #d9dee6; }
.hsplit { width: 8px; height: 15px; border: 1px solid #70757c; background: #fff; display: flex; align-items: center; justify-content: center; }
.hsplit i { width: 1px; height: 8px; background: #667; }
.harrow { width: 17px; display: flex; align-items: center; justify-content: center; }
.hthumb { width: 211px; border: 1px solid #88909c; border-radius: 2px; background: linear-gradient(#f7f8fa, #d8dce3); display: flex; align-items: center; justify-content: center; gap: 1px; }
.hthumb i { width: 1px; height: 7px; background: #777d86; }
.harrow.right { margin-left: auto; }
.cornerbox { flex: 1; border-left: 1px solid #a8afb8; }
.status { height: 21px; flex: none; display: flex; align-items: center; background: linear-gradient(#e4e7ea, #c6cacf 55%, #b4b9bf); }
.ready { width: 42px; padding-left: 8px; height: 20px; line-height: 19px; border-right: 1px solid #858c94; box-shadow: 1px 0 0 #f4f5f6; white-space: nowrap; }
.views { margin-left: auto; display: flex; height: 20px; align-items: center; border-left: 1px solid #858c94; padding-left: 5px; }
.view { width: 19px; height: 19px; display: flex; align-items: center; justify-content: center; }
.view.on { background: linear-gradient(#fbd271, #ffe582); border: 1px solid #bc8b37; border-radius: 2px; }
.percent { width: 33px; margin: 0 7px 0 9px; font-size: 12.5px; line-height: 19px; position: relative; z-index: 7; }
.grip { margin: 7px 0 0 7px; }
.mark { position: absolute; border: 4px solid #f9383b; z-index: 5; }
.tabmark { left: 244px; top: 28px; width: 64px; height: 30px; border-width: 3px 4px 3px; }
.namemark { left: 358px; top: 52px; width: 99px; height: 36px; border-width: 3px; }
.watermark { position: absolute; left: 660px; top: 680px; z-index: 6; }
.wm-bai { font: 700 35px "Liberation Sans", sans-serif; }
.wm-du { font: 700 19px "Liberation Sans", sans-serif; }
.wm-cn { font: 700 26px "Noto Sans CJK SC", sans-serif; }
.wm-url { font: 16px "Noto Sans", sans-serif; fill: #fff; fill-opacity: .95; stroke: #b5bac2; stroke-width: 1.2px; stroke-opacity: .5; paint-order: stroke; }
</style>
